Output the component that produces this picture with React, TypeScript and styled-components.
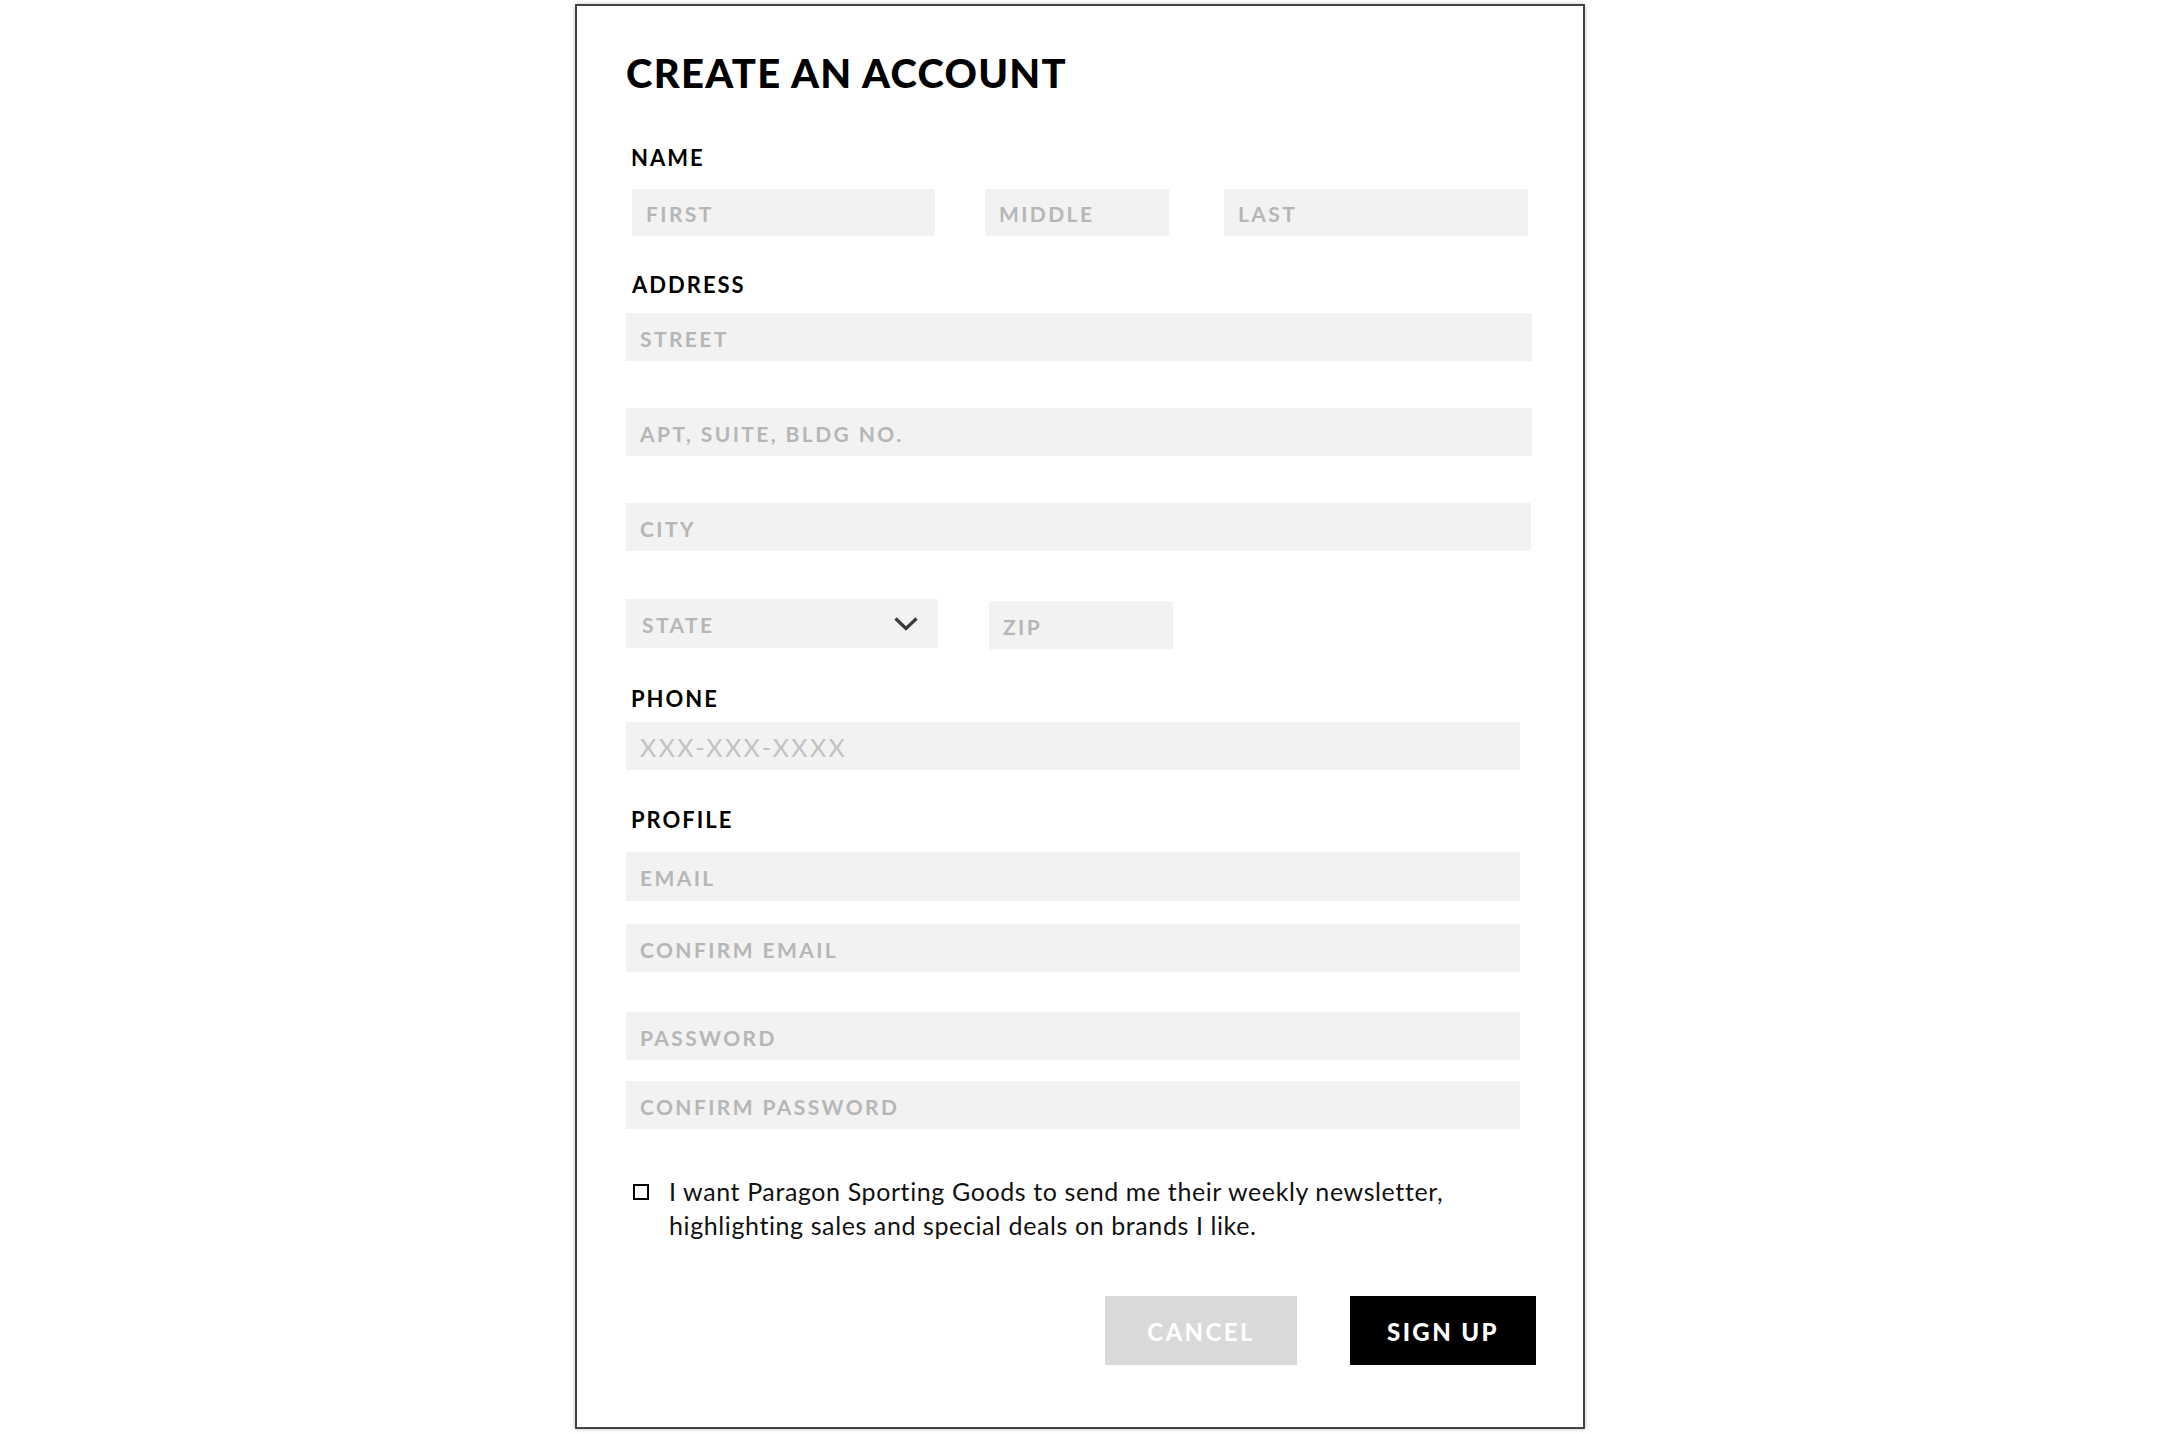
import React from "react";
import styled, { createGlobalStyle } from "styled-components";

const Global = createGlobalStyle`
  html, body { margin: 0; padding: 0; background: #ffffff; }
  body { font-family: Lato, "Liberation Sans", sans-serif; }
  * { box-sizing: border-box; }
`;

const Page = styled.div`
  width: 2160px;
  min-height: 1434px;
  padding-top: 4px;
  display: flex;
  justify-content: center;
  align-items: flex-start;
`;

const Card = styled.form`
  width: 1010px;
  height: 1425px;
  border: 2px solid #444444;
  box-shadow: 0 0 4px rgba(0, 0, 0, 0.28);
  background: #ffffff;
  padding: 0 50px 0 49px;
  display: flex;
  flex-direction: column;
`;

const Title = styled.h1`
  margin: 43px 0 0 0;
  font-family: Lato, "Liberation Sans", sans-serif;
  font-weight: 900;
  font-size: 40px;
  line-height: 48px;
  letter-spacing: 1.3px;
  color: #000;
`;

const Label = styled.div<{ $top: number; $indent?: number }>`
  margin-top: ${(p) => p.$top}px;
  margin-left: ${(p) => p.$indent ?? 5}px;
  font-weight: 700;
  font-size: 22px;
  line-height: 28px;
  letter-spacing: 2px;
  color: #000;
`;

const Row = styled.div<{ $top: number; $indent?: number }>`
  margin-top: ${(p) => p.$top}px;
  margin-left: ${(p) => p.$indent ?? 0}px;
  display: flex;
  align-items: flex-start;
`;

const Field = styled.input<{ $w: number; $h?: number; $gap?: number; $light?: boolean }>`
  width: ${(p) => p.$w}px;
  height: ${(p) => p.$h ?? 48}px;
  margin-right: ${(p) => p.$gap ?? 0}px;
  border: none;
  outline: none;
  background: #f2f2f2;
  padding: 2px 0 0 14px;
  font-family: Lato, "Liberation Sans", sans-serif;
  font-weight: ${(p) => (p.$light ? 400 : 700)};
  font-size: ${(p) => (p.$light ? 25 : 21)}px;
  letter-spacing: 2.4px;
  color: #333;
  &::placeholder {
    color: ${(p) => (p.$light ? "#c2c2c2" : "#b6b6b6")};
  }
`;

const Select = styled.div`
  width: 312px;
  height: 49px;
  margin-right: 51px;
  background: #f2f2f2;
  padding: 1px 20px 0 16px;
  display: flex;
  align-items: center;
  justify-content: space-between;
  font-weight: 700;
  font-size: 21px;
  letter-spacing: 2.4px;
  color: #b6b6b6;
`;

const Zip = styled(Field)`
  margin-top: 2px;
`;

const Check = styled.label`
  margin-top: 45px;
  margin-left: 7px;
  display: flex;
  align-items: flex-start;
  gap: 20px;
  font-family: Lato, "Liberation Sans", sans-serif;
  font-weight: 400;
  font-size: 25px;
  line-height: 34px;
  color: #111;
  letter-spacing: 0.6px;
`;

const Box = styled.span`
  flex: none;
  width: 16px;
  height: 16px;
  margin-top: 10px;
  border: 2px solid #000;
`;

const Buttons = styled.div`
  margin-top: 54px;
  margin-right: -3px;
  display: flex;
  justify-content: flex-end;
  gap: 53px;
`;

const Button = styled.button<{ $primary?: boolean; $w: number }>`
  width: ${(p) => p.$w}px;
  height: 69px;
  border: none;
  background: ${(p) => (p.$primary ? "#000" : "#d9d9d9")};
  color: #fff;
  font-family: Lato, "Liberation Sans", sans-serif;
  font-weight: ${(p) => (p.$primary ? 900 : 700)};
  font-size: 24px;
  letter-spacing: 2.4px;
  padding-top: 2px;
`;

const Chevron = () => (
  <svg width="24" height="14" viewBox="0 0 24 14" fill="none">
    <path d="M1.5 1.5 L12 11.5 L22.5 1.5" stroke="#3a3a3a" strokeWidth="3.2" />
  </svg>
);

export default function App() {
  return (
    <>
      <Global />
      <Page>
        <Card onSubmit={(e) => e.preventDefault()}>
          <Title>CREATE AN ACCOUNT</Title>

          <Label $top={47}>NAME</Label>
          <Row $top={17} $indent={6}>
            <Field $w={303} $h={47} $gap={50} placeholder="FIRST" />
            <Field $w={184} $h={47} $gap={55} placeholder="MIDDLE" />
            <Field $w={304} $h={47} placeholder="LAST" />
          </Row>

          <Label $top={35} $indent={6}>ADDRESS</Label>
          <Row $top={14}>
            <Field $w={906} placeholder="STREET" />
          </Row>
          <Row $top={47}>
            <Field $w={906} placeholder="APT, SUITE, BLDG NO." />
          </Row>
          <Row $top={47}>
            <Field $w={905} placeholder="CITY" />
          </Row>
          <Row $top={48}>
            <Select>
              <span>STATE</span>
              <Chevron />
            </Select>
            <Zip $w={184} placeholder="ZIP" />
          </Row>

          <Label $top={36}>PHONE</Label>
          <Row $top={9}>
            <Field $w={894} $light placeholder="XXX-XXX-XXXX" />
          </Row>

          <Label $top={36}>PROFILE</Label>
          <Row $top={18}>
            <Field $w={894} $h={49} placeholder="EMAIL" />
          </Row>
          <Row $top={23}>
            <Field $w={894} placeholder="CONFIRM EMAIL" />
          </Row>
          <Row $top={40}>
            <Field $w={894} placeholder="PASSWORD" />
          </Row>
          <Row $top={21}>
            <Field $w={894} placeholder="CONFIRM PASSWORD" />
          </Row>

          <Check>
            <Box />
            <span>
              I want Paragon Sporting Goods to send me their weekly newsletter,
              <br />
              highlighting sales and special deals on brands I like.
            </span>
          </Check>

          <Buttons>
            <Button type="button" $w={192}>CANCEL</Button>
            <Button type="submit" $primary $w={186}>SIGN UP</Button>
          </Buttons>
        </Card>
      </Page>
    </>
  );
}
